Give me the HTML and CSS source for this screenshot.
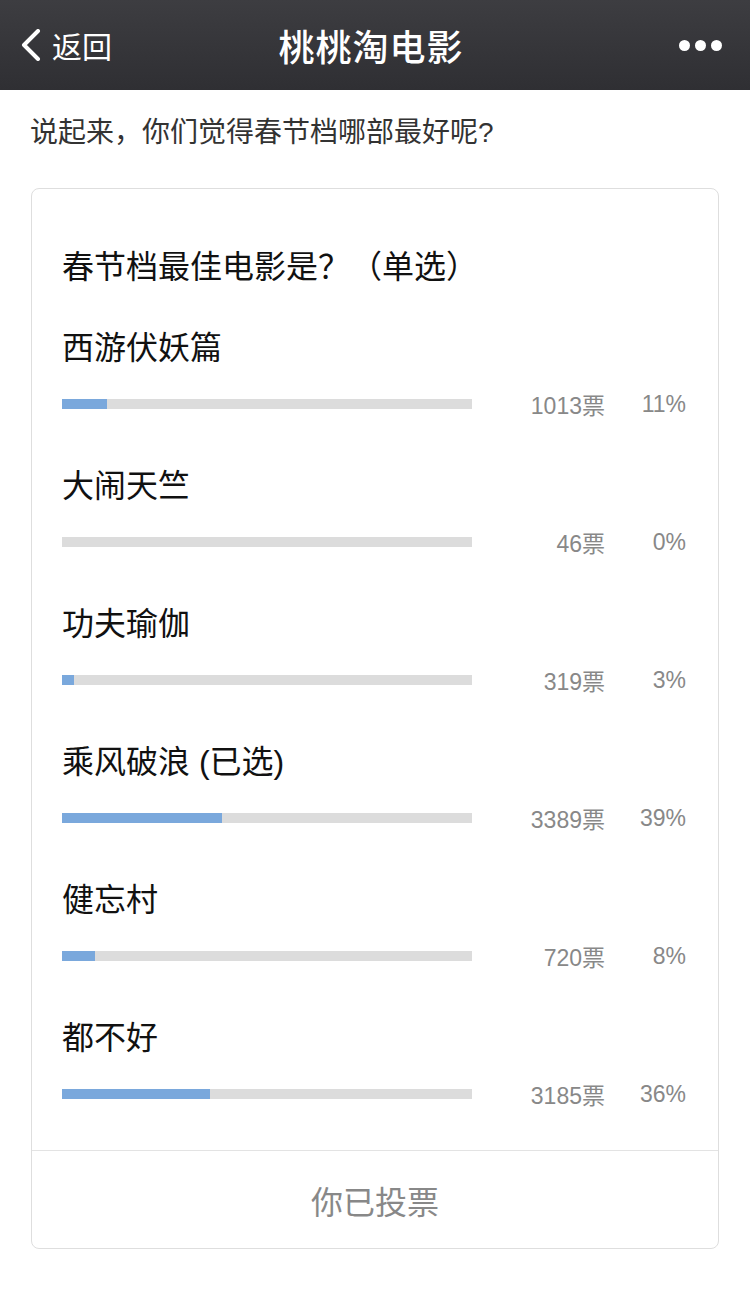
FILE: index.html
```html
<!DOCTYPE html>
<html>
<head>
	<meta charset="utf-8">
	<title>桃桃淘电影</title>
	<link rel="stylesheet" href="styles.css">
</head>
<body>
<div class="navbar">
  <div class="back">
    <svg class="back-icon" width="22" height="32" viewBox="0 0 22 32">
      <polyline points="18,2 4,16 18,30" fill="none" stroke="#fff" stroke-width="4" stroke-linecap="round" stroke-linejoin="round"/>
    </svg>
    <span>返回</span>
  </div>
  <div class="nav-title">桃桃淘电影</div>
  <div class="more"><i></i><i></i><i></i></div>
</div>

<div class="intro">说起来，你们觉得春节档哪部最好呢?</div>

<div class="vote">
  <div class="vote-title">春节档最佳电影是？（单选）</div>
  <div class="options">
    <div class="option">
      <div class="option-name">西游伏妖篇</div>
      <div class="option-row">
        <div class="bar"><div class="bar-fill" style="width: 11%"></div></div>
        <div class="count">1013票</div>
        <div class="percent">11%</div>
      </div>
    </div>
    <div class="option">
      <div class="option-name">大闹天竺</div>
      <div class="option-row">
        <div class="bar"><div class="bar-fill" style="width: 0%"></div></div>
        <div class="count">46票</div>
        <div class="percent">0%</div>
      </div>
    </div>
    <div class="option">
      <div class="option-name">功夫瑜伽</div>
      <div class="option-row">
        <div class="bar"><div class="bar-fill" style="width: 3%"></div></div>
        <div class="count">319票</div>
        <div class="percent">3%</div>
      </div>
    </div>
    <div class="option">
      <div class="option-name">乘风破浪 (已选)</div>
      <div class="option-row">
        <div class="bar"><div class="bar-fill" style="width: 39%"></div></div>
        <div class="count">3389票</div>
        <div class="percent">39%</div>
      </div>
    </div>
    <div class="option">
      <div class="option-name">健忘村</div>
      <div class="option-row">
        <div class="bar"><div class="bar-fill" style="width: 8%"></div></div>
        <div class="count">720票</div>
        <div class="percent">8%</div>
      </div>
    </div>
    <div class="option">
      <div class="option-name">都不好</div>
      <div class="option-row">
        <div class="bar"><div class="bar-fill" style="width: 36%"></div></div>
        <div class="count">3185票</div>
        <div class="percent">36%</div>
      </div>
    </div>
  </div>
  <div class="vote-footer">你已投票</div>
</div>
</body>
</html>
```

FILE: styles.css
```css
body {
    margin: 0;
    background: #fff;
    font-family: "Liberation Sans", "Noto Sans CJK SC", sans-serif;
    color: #111;
}

.navbar {
    height: 90px;
    display: flex;
    align-items: center;
    justify-content: space-between;
    padding: 0 28px 0 20px;
    background: linear-gradient(#3d3d41, #2f2f33);
    color: #fff;
}

.back {
    width: 140px;
    display: flex;
    align-items: center;
    font-size: 30px;
}

.back-icon {
    margin-right: 10px;
}

.nav-title {
    font-size: 36px;
    font-weight: 500;
    letter-spacing: 1px;
}

.more {
    width: 140px;
    display: flex;
    justify-content: flex-end;
    gap: 5px;
}

.more i {
    display: block;
    width: 11px;
    height: 11px;
    border-radius: 50%;
    background: #fff;
}

.intro {
    margin: 23px 30px 0;
    font-size: 28px;
    line-height: 40px;
    color: #333;
}

.vote {
    margin: 35px 31px 0;
    border: 1px solid #dedede;
    border-radius: 8px;
}

.vote-title {
    padding: 56px 32px 0 30px;
    font-size: 32px;
    line-height: 44px;
    color: #111;
}

.options {
    display: flex;
    flex-direction: column;
    gap: 43px;
    padding: 37px 32px 39px 30px;
}

.option-name {
    font-size: 32px;
    line-height: 44px;
    color: #111;
}

.option-row {
    display: grid;
    grid-template-columns: 410px 1fr 81px;
    align-items: center;
    height: 34px;
    margin-top: 17px;
    font-size: 23px;
    color: #888;
}

.bar {
    height: 10px;
    background: #dcdcdc;
}

.bar-fill {
    height: 100%;
    background: #7aa8dc;
}

.count,
.percent {
    text-align: right;
}

.vote-footer {
    height: 97px;
    border-top: 1px solid #e3e3e3;
    display: flex;
    align-items: center;
    justify-content: center;
    font-size: 32px;
    color: #888;
}
```
